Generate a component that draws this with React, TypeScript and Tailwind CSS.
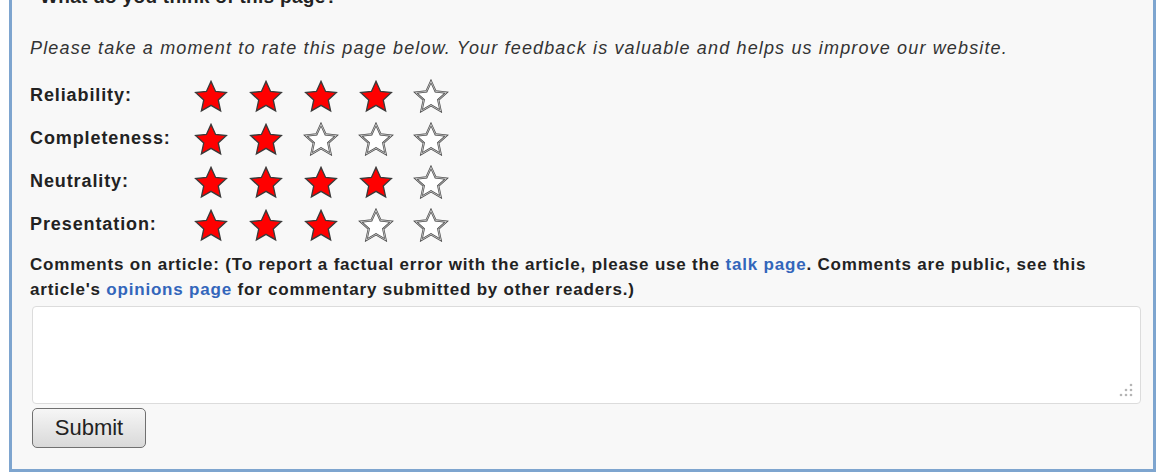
import React, { useState } from "react";

type Rating = { label: string; value: number };

const initialRatings: Rating[] = [
  { label: "Reliability:", value: 4 },
  { label: "Completeness:", value: 2 },
  { label: "Neutrality:", value: 4 },
  { label: "Presentation:", value: 3 },
];

const STAR_POINTS =
  "12,1.6 15.1,8.4 22.4,9.2 16.9,14.2 18.5,21.6 12,17.8 5.5,21.6 7.1,14.2 1.6,9.2 8.9,8.4";

const Star = ({ filled, onClick }: { filled: boolean; onClick: () => void }) => (
  <button type="button" onClick={onClick} className="flex h-[34px] w-[36px] items-center justify-center">
    <svg width="36" height="34" viewBox="0 0 24 23">
      {filled ? (
        <polygon points={STAR_POINTS} fill="#ff0000" stroke="#3a3a3a" strokeWidth="0.9" strokeLinejoin="miter" />
      ) : (
        <>
          <polygon points={STAR_POINTS} fill="#ffffff" stroke="#4a4a4a" strokeWidth="1.5" strokeLinejoin="miter" />
          <polygon points={STAR_POINTS} fill="none" stroke="#f4f4f4" strokeWidth="0.45" strokeLinejoin="miter" />
        </>
      )}
    </svg>
  </button>
);

// little dotted grip in the corner of the comment box
const ResizeGrip = () => (
  <svg width="14" height="14" viewBox="0 0 14 14" className="pointer-events-none absolute bottom-[7px] right-[8px]">
    {[
      [12, 2],
      [12, 7],
      [7, 7],
      [12, 12],
      [7, 12],
      [2, 12],
    ].map(([cx, cy]) => (
      <circle key={`${cx}-${cy}`} cx={cx} cy={cy} r="1.3" fill="#b5b5b5" />
    ))}
  </svg>
);

const App = () => {
  const [ratings, setRatings] = useState(initialRatings);
  const [comment, setComment] = useState("");

  const setRating = (row: number, value: number) => {
    setRatings((prev) => prev.map((r, i) => (i === row ? { ...r, value } : r)));
  };

  return (
    <div className="h-[476px] w-[1160px] overflow-hidden bg-white font-['Liberation_Sans',Arial,sans-serif] text-[#222]">
      <div className="ml-[9px] mr-[4px] mt-[-30px] h-[502px] border-[3px] border-[#7ea5cf] bg-[#f8f8f8] pl-[18px] pr-[11px]">
        <h3 className="mt-[13px] pl-[10px] text-[19px] font-bold leading-[22px] tracking-[0.3px] text-[#222]">
          What do you think of this page?
        </h3>

        <p className="mt-[29px] text-[18px] italic leading-[22px] tracking-[1.15px] text-[#333]">
          Please take a moment to rate this page below. Your feedback is valuable and helps us improve our website.
        </p>

        <div className="mt-[15px] flex flex-col">
          {ratings.map((r, row) => (
            <div key={r.label} className="flex h-[43px] items-center">
              <span className="w-[163px] text-[18px] font-bold tracking-[0.9px]">{r.label}</span>
              <div className="flex gap-[19px]">
                {[1, 2, 3, 4, 5].map((n) => (
                  <Star key={n} filled={n <= r.value} onClick={() => setRating(row, n)} />
                ))}
              </div>
            </div>
          ))}
        </div>

        <p className="mt-[6px] w-[1100px] text-[17px] font-bold leading-[25px] tracking-[0.8px]">
          Comments on article: (To report a factual error with the article, please use the{" "}
          <a href="#talk" className="text-[#3366bb]">
            talk page
          </a>
          . Comments are public, see this article&apos;s{" "}
          <a href="#opinions" className="text-[#3366bb]">
            opinions page
          </a>{" "}
          for commentary submitted by other readers.)
        </p>

        <div className="relative ml-[2px] mt-[4px] h-[98px] w-[1109px]">
          <textarea
            value={comment}
            onChange={(e) => setComment(e.target.value)}
            className="h-full w-full resize-none rounded-[4px] border border-[#dcdcdc] bg-white p-2 text-[16px] outline-none"
          />
          <ResizeGrip />
        </div>

        <button
          type="button"
          className="ml-[2px] mt-[4px] h-[40px] w-[114px] rounded-[5px] border border-[#707070] bg-gradient-to-b from-[#f6f6f6] to-[#d9d9d9] text-[22px] leading-none text-[#222]"
        >
          Submit
        </button>
      </div>
    </div>
  );
};

export default App;
